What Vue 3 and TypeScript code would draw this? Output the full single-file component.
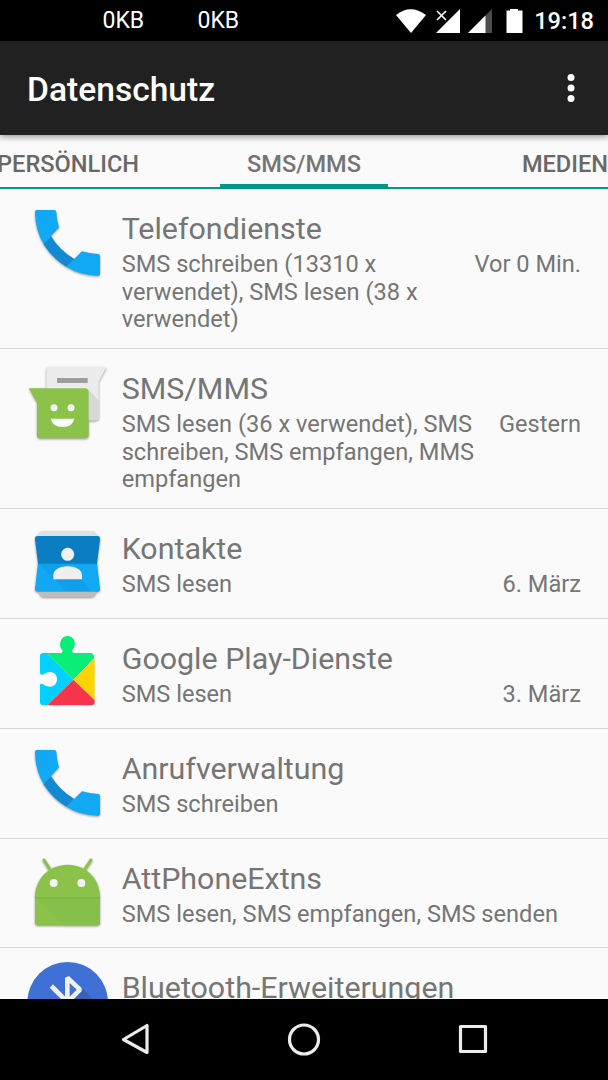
<script setup lang="ts">
type IconName = 'phone' | 'messages' | 'contacts' | 'play' | 'android' | 'bluetooth'

interface AppEntry {
  name: string
  icon: IconName
  lines: string[]
  time?: string
}

const iconViewBox: Record<IconName, string> = {
  phone: '21 6 243 243',
  messages: '21 21 243 243',
  contacts: '21 6 243 243',
  play: '21 6 243 243',
  android: '21 6 243 243',
  bluetooth: '21 63 243 243',
}

const entries: AppEntry[] = [
  {
    name: 'Telefondienste',
    icon: 'phone',
    lines: ['SMS schreiben (13310 x', 'verwendet), SMS lesen (38 x', 'verwendet)'],
    time: 'Vor 0 Min.',
  },
  {
    name: 'SMS/MMS',
    icon: 'messages',
    lines: ['SMS lesen (36 x verwendet), SMS', 'schreiben, SMS empfangen, MMS', 'empfangen'],
    time: 'Gestern',
  },
  { name: 'Kontakte', icon: 'contacts', lines: ['SMS lesen'], time: '6. März' },
  { name: 'Google Play-Dienste', icon: 'play', lines: ['SMS lesen'], time: '3. März' },
  { name: 'Anrufverwaltung', icon: 'phone', lines: ['SMS schreiben'] },
  { name: 'AttPhoneExtns', icon: 'android', lines: ['SMS lesen, SMS empfangen, SMS senden'] },
  { name: 'Bluetooth-Erweiterungen', icon: 'bluetooth', lines: [] },
]
</script>

<template>
  <div class="screen">
    <div class="status">
      <span class="rate first">0KB</span>
      <span class="rate">0KB</span>
      <svg class="signals" width="132" height="40" viewBox="0 0 132 40">
        <path d="M0 14 Q14.6 2.6 30 14 L15 32Z" fill="#fff" />
        <path d="M64 8V32H40L54 18Z" fill="#fff" />
        <path d="M41 10L50 19M50 10L41 19" stroke="#fff" stroke-width="1.6" />
        <path d="M96 8V32H72Z" fill="#4c4c4c" />
        <path d="M89.5 14.5V32H72Z" fill="#fff" />
        <path d="M110.5 9.5H114V8H122V9.5H126.500V32H110.500Z" fill="#fff" />
      </svg>
      <span class="clock">19:18</span>
    </div>

    <header class="bar">
      <h1>Datenschutz</h1>
      <svg class="more" width="8" height="30" viewBox="0 0 8 30">
        <circle cx="4" cy="4.500" r="3.5" fill="#fff" />
        <circle cx="4" cy="15" r="3.5" fill="#fff" />
        <circle cx="4" cy="25.500" r="3.5" fill="#fff" />
      </svg>
    </header>

    <nav class="tabs">
      <span class="tab left">PERSÖNLICH</span>
      <span class="tab active">SMS/MMS</span>
      <span class="tab right">MEDIEN</span>
    </nav>

    <main class="list">
      <section
        v-for="entry in entries"
        :key="entry.name"
        class="row"
        :class="[entry.icon, { tall: entry.lines.length > 1 }]"
      >
        <svg class="icon" width="81" height="81" :viewBox="iconViewBox[entry.icon]">
          <g v-if="entry.icon === 'phone'" class="shade">
            <path d="M70 132L93 108Q118 150 164 178L139 200Q98 176 70 132Z" fill="#128ad3" />
            <path d="M50 30H103Q108 30 109 36Q110 60 117 82L71 132Q46 92 45 37Q45 30 50 30Z" fill="#11a9f4" />
            <path d="M139 200L186 154Q208 161 234 162Q240 162 240 168V221Q240 227 234 227Q182 226 139 200Z" fill="#11a9f4" />
          </g>
          <g v-else-if="entry.icon === 'messages'" class="shade">
            <path d="M88 36H260L236 80V187Q236 196 227 196H88Q79 196 79 187V45Q79 36 88 36Z" fill="#ececec" />
            <path d="M203 103L236 136V187Q236 196 227 196H203Z" fill="#d8d8d8" />
            <path d="M111 69H203V84H111Z" fill="#9d9d9d" />
            <path d="M27 100H195Q206 100 206 111V240Q206 250 195 250H62Q51 250 51 240V143Z" fill="#8bc34a" />
            <circle cx="102" cy="158" r="10.500" fill="#f5f5f5" />
            <circle cx="153" cy="158" r="10.500" fill="#f5f5f5" />
            <path d="M92 191H163Q158 216 128 216T92 191Z" fill="#fafafa" />
          </g>
          <g v-else-if="entry.icon === 'contacts'" class="shade">
            <path d="M68 33H216Q225 33 231 48H54Q60 33 68 33Z" fill="#e0e0e0" />
            <path d="M54 210H231Q225 231 214 231H70Q60 231 54 210Z" fill="#bdbdbd" />
            <path d="M54 129H231L240 206Q241 215 231 215H54Q44 215 45 206Z" fill="#11a9f4" />
            <path d="M54 129L138 213H214L182 178L120 129Z" fill="#0fa0ea" />
            <path d="M53 48H232Q241 48 240 58L231 131H54L45 58Q44 48 53 48Z" fill="#0b7dc3" />
            <circle cx="143" cy="103" r="19.500" fill="#f0f0f0" />
            <path d="M100 178V166C100 148 122 139 143 139S186 148 186 166V178Z" fill="#f0f0f0" />
          </g>
          <g v-else-if="entry.icon === 'play'">
            <path d="M80 69H124Q129 67 127 59C118 52 120 42 121 36C124 24 132 18 142 18S161 24 164 36C166 44 164 53 157 59Q155 67 160 69H213Q220 69 223 84L160 149Z" fill="#08ee76" />
            <path d="M80 69L160 149L82 226H70Q60 226 60 216V165Q61 160 68 162C75 168 82 170 90 170C103 170 111 161 111 148S103 126 90 126C82 126 76 129 72 133Q61 137 60 130V79Q60 69 70 69Z" fill="#00d1ff" />
            <path d="M224 85V211L160 149Z" fill="#ffd202" />
            <path d="M160 149L224 211V216Q224 226 213 226H82Z" fill="#f5364a" />
          </g>
          <g v-else-if="entry.icon === 'android'" class="shade">
            <path d="M72 30L88 55M213 30L196 55" stroke="#8bc34a" stroke-width="9" stroke-linecap="round" />
            <path d="M45 143C45 85 88 44 143 44S240 85 240 143V217Q240 226 231 226H54Q45 226 45 217Z" fill="#8bc34a" />
            <path d="M47 142H240V152L240 217Q240 226 231 226H133Z" fill="#86bf49" />
            <path d="M45 142H240V147H45Z" fill="#7fb643" />
            <circle cx="101" cy="99" r="12" fill="#f3f3f3" />
            <circle cx="184" cy="99" r="12" fill="#f3f3f3" />
          </g>
          <g v-else>
            <circle cx="143" cy="187" r="121" fill="#3f70d6" />
            <path d="M190 148L230 188V230H110L150 190Z" fill="#3762ba" />
            <path d="M94 138L188 232L142 278V113L180 149L94 235" fill="none" stroke="#f0f0f0" stroke-width="14" stroke-linejoin="bevel" />
          </g>
        </svg>
        <div class="text">
          <h2>{{ entry.name }}</h2>
          <div v-if="entry.lines.length" class="detail">
            <p><span v-for="line in entry.lines" :key="line" class="line">{{ line }}</span></p>
            <time v-if="entry.time">{{ entry.time }}</time>
          </div>
        </div>
      </section>
    </main>

    <footer class="nav">
      <svg width="608" height="81" viewBox="0 0 608 81" fill="none" stroke="#ececec" stroke-width="3.200" stroke-linejoin="round">
        <path d="M123.500 40.500L147 26.500V53.500Z" />
        <circle cx="304" cy="40.500" r="14.500" />
        <path d="M460.500 27.500H485.500V52.500H460.500Z" />
      </svg>
    </footer>
  </div>
</template>

<style>
body {
  margin: 0;
  background: #000;
}
</style>

<style scoped>
.screen {
  width: 608px;
  height: 1080px;
  overflow: hidden;
  display: flex;
  flex-direction: column;
  background: #fafafa;
  color: #757575;
  font-family: Roboto, "Liberation Sans", sans-serif;
}
h1, h2, p {
  margin: 0;
  font-weight: 400;
}
.status {
  flex: none;
  height: 41px;
  box-sizing: border-box;
  padding-right: 14px;
  display: flex;
  align-items: center;
  background: #000;
  color: #fff;
}
.rate {
  width: 95px;
  font-size: 23px;
  line-height: 40px;
}
.rate.first {
  margin-left: 102.500px;
}
.signals {
  margin-left: 103.500px;
}
.clock {
  margin-left: auto;
  font-size: 23.600px;
  font-weight: 500;
  line-height: 42px;
}
.bar {
  flex: none;
  height: 94px;
  box-sizing: border-box;
  padding: 0 33px 0 27px;
  display: flex;
  align-items: center;
  justify-content: space-between;
  background: #212121;
  color: #fff;
  box-shadow: 0 1px 7px rgba(0, 0, 0, 0.5);
  z-index: 1;
}
.bar h1 {
  font-size: 33.6px;
  font-weight: 500;
  line-height: 40px;
  padding-top: 4px;
}
.tabs {
  flex: none;
  height: 54px;
  box-sizing: border-box;
  border-bottom: 2px solid #009688;
  display: flex;
  justify-content: space-between;
  font-size: 23.6px;
  font-weight: 500;
  line-height: 59px;
  white-space: nowrap;
}
.tab {
  width: 220px;
  color: #686868;
}
.tab.left {
  text-indent: -3px;
}
.tab.active {
  width: 168px;
  height: 49px;
  border-bottom: 5px solid #009688;
  text-align: center;
  color: #757575;
}
.tab.right {
  text-align: right;
}
.list {
  flex: none;
  height: 810px;
  overflow: hidden;
}
.row {
  height: 110px;
  box-sizing: border-box;
  padding: 13px 27px 0;
  display: flex;
  border-bottom: 1px solid #d6d6d6;
}
.row.tall {
  height: 160px;
}
.row.android {
  height: 109px;
}
.icon {
  flex: none;
  margin-right: 13.700px;
}
.shade {
  filter: drop-shadow(0 3px 3px rgba(0, 0, 0, 0.4));
}
.text {
  flex: 1;
  padding-top: 8px;
  min-width: 0;
}
h2 {
  font-size: 30.400px;
  line-height: 37px;
  white-space: nowrap;
}
.detail {
  margin-top: 4px;
  display: flex;
  justify-content: space-between;
  font-size: 23.600px;
  line-height: 27.700px;
  white-space: nowrap;
}
.line {
  display: block;
}
.nav {
  flex: none;
  height: 81px;
  background: #000;
}
.nav svg {
  display: block;
}
</style>
